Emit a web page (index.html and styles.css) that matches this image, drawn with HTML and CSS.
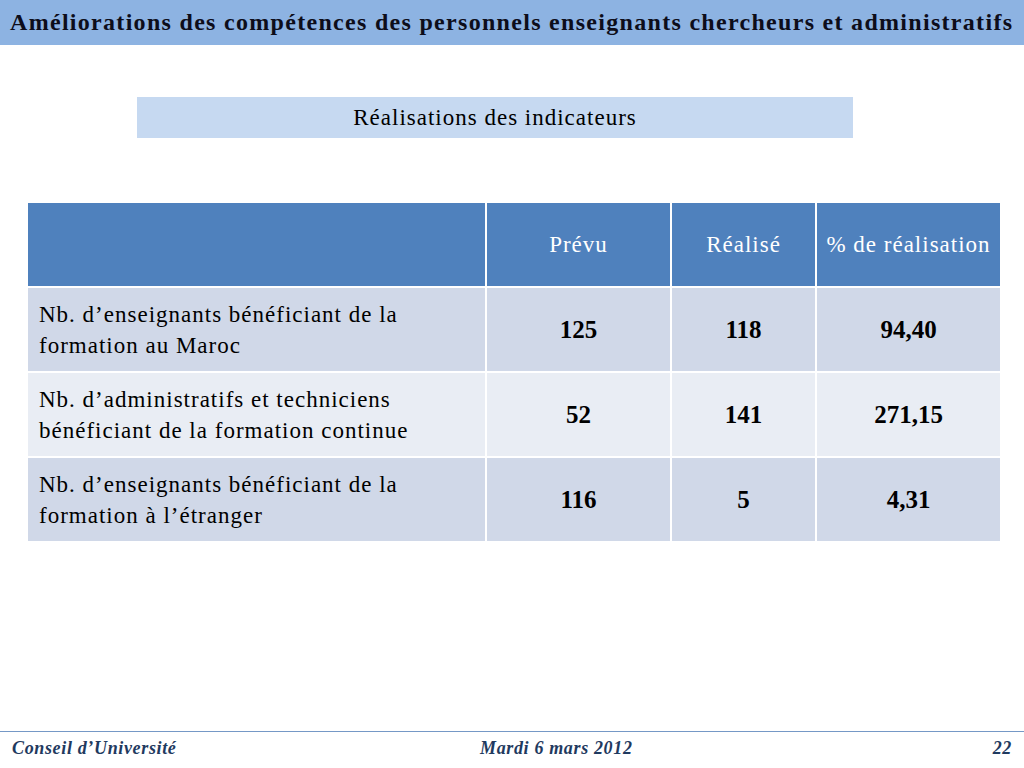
FILE: index.html
```html
<!DOCTYPE html>
<html lang="fr">
<head>
<meta charset="utf-8">
<title>Améliorations des compétences</title>
<link rel="stylesheet" href="styles.css">
</head>
<body>
<div class="page">
  <header class="title-bar">
    <h1 class="title">Améliorations des compétences des personnels enseignants chercheurs et administratifs</h1>
  </header>
  <main class="content">
    <div class="subtitle">Réalisations des indicateurs</div>
    <table class="grid">
      <colgroup>
        <col class="c-label"><col class="c-num"><col class="c-mid"><col class="c-num">
      </colgroup>
      <thead>
        <tr>
          <th></th>
          <th>Prévu</th>
          <th>Réalisé</th>
          <th>% de réalisation</th>
        </tr>
      </thead>
      <tbody>
        <tr class="odd">
          <td><div class="label">Nb. d’enseignants bénéficiant de la<br>formation au Maroc</div></td>
          <td class="num">125</td>
          <td class="num">118</td>
          <td class="num">94,40</td>
        </tr>
        <tr class="even">
          <td><div class="label">Nb. d’administratifs et techniciens<br>bénéficiant de la formation continue</div></td>
          <td class="num">52</td>
          <td class="num">141</td>
          <td class="num">271,15</td>
        </tr>
        <tr class="odd">
          <td><div class="label">Nb. d’enseignants bénéficiant de la<br>formation à l’étranger</div></td>
          <td class="num">116</td>
          <td class="num">5</td>
          <td class="num">4,31</td>
        </tr>
      </tbody>
    </table>
  </main>
  <footer class="footer">
    <span class="f-left">Conseil d’Université</span>
    <span class="f-center">Mardi 6 mars 2012</span>
    <span class="f-right">22</span>
  </footer>
</div>
</body>
</html>
```

FILE: styles.css
```css
html, body {
  margin: 0;
  padding: 0;
  background: #ffffff;
}
.page {
  width: 1024px;
  height: 768px;
  display: flex;
  flex-direction: column;
  font-family: "Liberation Serif", "DejaVu Serif", serif;
  color: #000;
}
.title-bar {
  height: 45px;
  background: #8db3e2;
  display: flex;
  align-items: center;
  padding-left: 10px;
  box-sizing: border-box;
}
.title {
  margin: 0;
  font-size: 24px;
  font-weight: bold;
  color: #0d0d1a;
  white-space: nowrap;
  letter-spacing: 1.3px;
}
.content {
  flex: 1;
  display: flex;
  flex-direction: column;
}
.subtitle {
  margin: 52px 0 0 137px;
  width: 716px;
  height: 41px;
  background: #c6d9f1;
  display: flex;
  align-items: center;
  justify-content: center;
  font-size: 23px;
  letter-spacing: 1px;
  color: #000;
}
.grid {
  margin: 63px 0 0 26px;
  width: 976px;
  border-collapse: separate;
  border-spacing: 2px;
  table-layout: fixed;
  font-size: 23px;
  letter-spacing: 1px;
}
.c-label { width: 457px; }
.c-num { width: 183px; }
.c-mid { width: 143px; }
.grid th {
  background: #4f81bd;
  color: #ffffff;
  font-weight: normal;
  height: 83px;
  padding: 0;
  text-align: center;
  white-space: nowrap;
}
.grid td {
  height: 83px;
  padding: 0;
}
.grid tr.odd td { background: #d0d8e8; }
.grid tr.even td { background: #e9edf4; }
.label {
  padding: 0 0 0 11px;
  line-height: 31px;
  text-align: left;
  white-space: nowrap;
}
.grid td.num {
  text-align: center;
  font-weight: bold;
  font-size: 25px;
  letter-spacing: 0;
}
.footer {
  height: 37px;
  border-top: 1px solid #7598c6;
  display: flex;
  align-items: center;
  justify-content: space-between;
  padding: 0 12px 4px 12px;
  box-sizing: border-box;
  font-style: italic;
  font-weight: bold;
  font-size: 18px;
  letter-spacing: 0.65px;
  color: #1f3a60;
  position: relative;
}
.f-center {
  position: absolute;
  left: 480px;
}
```
